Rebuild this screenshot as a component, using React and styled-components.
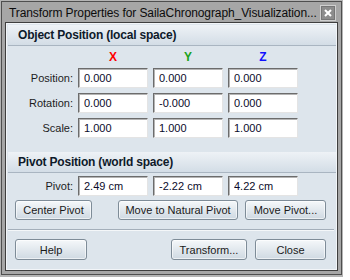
import React from 'react';
import styled, { createGlobalStyle } from 'styled-components';

const GlobalStyle = createGlobalStyle`
  body {
    margin: 0;
    background: #ffffff;
    font-family: "Liberation Sans", Arial, sans-serif;
  }
`;

const Window = styled.div`
  width: 343px;
  height: 277px;
  box-sizing: border-box;
  border: 1px solid #b4b4b4;
  border-bottom-width: 2px;
  background: #a6a6a6;
`;

const Frame = styled.div`
  height: 100%;
  box-sizing: border-box;
  border: 1px solid #4e4e4e;
  padding: 0 3px 3px 3px;
  display: flex;
  flex-direction: column;
`;

const TitleBar = styled.div`
  height: 20px;
  display: flex;
  align-items: flex-start;
  justify-content: space-between;
  padding-left: 4px;
`;

const Title = styled.div`
  font-size: 12px;
  line-height: 14px;
  margin-top: 4px;
  color: #0c0c0c;
  white-space: nowrap;
  letter-spacing: -0.1px;
`;

const CloseButton = styled.div`
  width: 14px;
  height: 14px;
  margin-top: 3px;
  margin-right: 2px;
  border: 1px solid #cfcfcf;
  box-shadow: inset 0 0 0 1px #767676;
  background: #8c8c8c;
  display: flex;
  align-items: center;
  justify-content: center;
`;

const Panel = styled.div`
  flex: 1;
  border: 1px solid #3e3e3e;
  box-shadow: inset 0 0 0 1px #f2f5f8;
  background: #dde5ec;
  display: flex;
  flex-direction: column;
`;

const SectionHeader = styled.div`
  height: 20px;
  margin: ${p => p.$top}px 1px 0 2px;
  padding-left: 10px;
  border-bottom: 1px solid #a9b5c1;
  background: linear-gradient(#eef2f6, #d3dde6);
  font-size: 12px;
  font-weight: bold;
  letter-spacing: -0.2px;
  color: #0e1a2a;
  display: flex;
  align-items: center;
`;

const FieldGrid = styled.div`
  display: grid;
  grid-template-columns: 67px 70px 70px 70px;
  column-gap: 5px;
  row-gap: 5px;
  margin-top: ${p => p.$top}px;
`;

const AxisLabel = styled.div`
  height: 12px;
  line-height: 12px;
  text-align: center;
  font-size: 12px;
  font-weight: bold;
  color: ${p => p.$color};
`;

const RowLabel = styled.div`
  height: 20px;
  line-height: 20px;
  text-align: right;
  font-size: 11px;
  color: #1c1c1c;
`;

const Field = styled.input`
  box-sizing: border-box;
  width: 70px;
  height: 20px;
  padding: 0 0 0 5px;
  border: 1px solid;
  border-color: #6c6c6c #e4e4e4 #e4e4e4 #6c6c6c;
  box-shadow: inset 1px 1px 0 #b4b4b4;
  background: #ffffff;
  font-family: "Liberation Sans", Arial, sans-serif;
  font-size: 11px;
  color: #0a0a2a;
  outline: none;
`;

const ButtonRow = styled.div`
  display: flex;
  align-items: center;
  gap: ${p => p.$gap}px;
  margin-top: ${p => p.$top}px;
  padding: 0 11px 0 9px;
`;

const Spacer = styled.div`
  flex: 1;
`;

const Button = styled.button`
  box-sizing: border-box;
  width: ${p => p.$w}px;
  height: ${p => p.$h}px;
  padding: 0;
  border: 1px solid #7e8c98;
  border-radius: 3px;
  background: linear-gradient(#f5f8fa, #cfd9e2);
  box-shadow: inset 0 0 0 1px rgba(255, 255, 255, 0.6);
  font-family: "Liberation Sans", Arial, sans-serif;
  font-size: 11px;
  color: #1a1a1a;
`;

const Separator = styled.div`
  height: 1px;
  margin: 9px 3px 0 2px;
  background: #a4afba;
  box-shadow: 0 1px 0 #f4f7f9;
`;

const rows = [
  { label: 'Position:', values: ['0.000', '0.000', '0.000'] },
  { label: 'Rotation:', values: ['0.000', '-0.000', '0.000'] },
  { label: 'Scale:', values: ['1.000', '1.000', '1.000'] },
];

export default function App() {
  return (
    <>
      <GlobalStyle />
      <Window>
        <Frame>
          <TitleBar>
            <Title>Transform Properties for SailaChronograph_Visualization...</Title>
            <CloseButton>
              <svg width="8" height="8" viewBox="0 0 8 8">
                <path d="M1 1 L7 7 M7 1 L1 7" stroke="#ffffff" strokeWidth="2" />
              </svg>
            </CloseButton>
          </TitleBar>
          <Panel>
            <SectionHeader $top={2}>Object Position (local space)</SectionHeader>
            <FieldGrid $top={5}>
              <div />
              <AxisLabel $color="#ff0000">X</AxisLabel>
              <AxisLabel $color="#1aa21a">Y</AxisLabel>
              <AxisLabel $color="#1010ff">Z</AxisLabel>
              {rows.map(row => (
                <React.Fragment key={row.label}>
                  <RowLabel>{row.label}</RowLabel>
                  {row.values.map((v, i) => (
                    <Field key={i} value={v} readOnly />
                  ))}
                </React.Fragment>
              ))}
            </FieldGrid>
            <SectionHeader $top={14}>Pivot Position (world space)</SectionHeader>
            <FieldGrid $top={3}>
              <RowLabel>Pivot:</RowLabel>
              <Field value="2.49 cm" readOnly />
              <Field value="-2.22 cm" readOnly />
              <Field value="4.22 cm" readOnly />
            </FieldGrid>
            <ButtonRow $top={4} $gap={7}>
              <Button $w={77} $h={20}>Center Pivot</Button>
              <Spacer />
              <Button $w={120} $h={20}>Move to Natural Pivot</Button>
              <Button $w={81} $h={20}>Move Pivot...</Button>
            </ButtonRow>
            <Separator />
            <ButtonRow $top={9} $gap={8}>
              <Button $w={72} $h={21}>Help</Button>
              <Spacer />
              <Button $w={76} $h={21}>Transform...</Button>
              <Button $w={71} $h={21}>Close</Button>
            </ButtonRow>
          </Panel>
        </Frame>
      </Window>
    </>
  );
}
